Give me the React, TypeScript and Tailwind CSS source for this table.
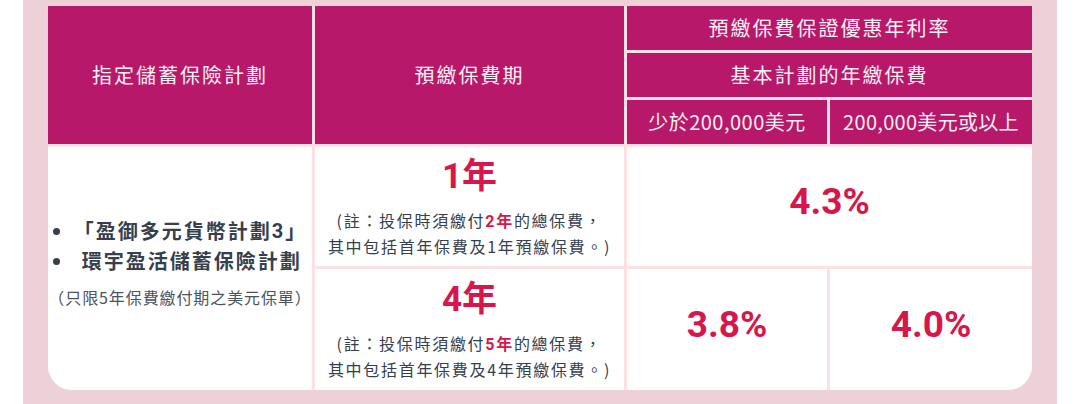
import React from 'react';

const CJK = "font-['Noto_Sans_CJK_TC','Noto_Sans',sans-serif]";
const NUM = "font-['Roboto','Noto_Sans_CJK_TC',sans-serif]";

const headCell = `bg-[#b8186a] text-[#fdf0f4] text-[20px] flex items-center justify-center ${CJK}`;

function Note({ paid, pre }: { paid: string; pre: string }) {
  return (
    <div className="mt-[12px] text-[16px] leading-[24px] tracking-[1.7px] text-[#36404d] text-center">
      <div>
        (註：投保時須繳付<span className={`font-bold text-[#d7174b] ${NUM}`}>{paid}</span>
        <span className="font-bold text-[#d7174b]">年</span>的總保費，
      </div>
      <div>其中包括首年保費及{pre}年預繳保費。)</div>
    </div>
  );
}

function Period({ years, paid }: { years: string; paid: string }) {
  return (
    <div className="bg-white flex flex-col items-center justify-center pb-[2px]">
      <div className="text-[35px] leading-[38px] font-bold text-[#d7174b]">
        <span className={NUM}>{years}</span>年
      </div>
      <Note paid={paid} pre={years} />
    </div>
  );
}

function Rate({ value, span }: { value: string; span?: boolean }) {
  return (
    <div className={`bg-white flex items-center justify-center pb-[10px] ${span ? 'col-span-2' : ''}`}>
      <span className={`text-[37px] font-bold text-[#d7174b] ${NUM}`}>{value}</span>
    </div>
  );
}

export default function App() {
  return (
    <div className={`w-[1080px] h-[404px] bg-white ${CJK}`}>
      <div className="mx-[23px] h-full bg-[#edd0d8] px-[25px] pt-[6px]">
        <div className="grid grid-cols-[264px_309px_200px_202px] grid-rows-[44px_44px_44px_119px_121px] gap-[3px] bg-[#fbe1e4] rounded-b-[24px] overflow-hidden">
          <div className={`${headCell} row-span-3 tracking-[2px]`}>指定儲蓄保險計劃</div>
          <div className={`${headCell} row-span-3 tracking-[2px]`}>預繳保費期</div>
          <div className={`${headCell} col-span-2 tracking-[2px]`}>預繳保費保證優惠年利率</div>
          <div className={`${headCell} col-span-2 tracking-[2px]`}>基本計劃的年繳保費</div>
          <div className={`${headCell} tracking-[0.5px]`}>少於200,000美元</div>
          <div className={`${headCell} tracking-[0.3px]`}>200,000美元或以上</div>

          <div className="row-span-2 bg-white flex flex-col items-center justify-center pb-[12px] text-[#36404d] whitespace-nowrap">
            <ul className="text-[20px] leading-[30px] font-bold tracking-[2px]">
              <li className="flex items-center">
                <span className="w-[7px] h-[7px] rounded-full bg-[#36404d] mr-[14px]" />
                「盈御多元貨幣計劃<span className={NUM}>3</span>」
              </li>
              <li className="flex items-center">
                <span className="w-[7px] h-[7px] rounded-full bg-[#36404d] mr-[22px]" />
                環宇盈活儲蓄保險計劃
              </li>
            </ul>
            <div className="mt-[9px] text-[16px] leading-[24px] tracking-[0.9px] text-[#4a5360]">
              （只限5年保費繳付期之美元保單）
            </div>
          </div>
          <Period years="1" paid="2" />
          <Rate value="4.3%" span />
          <Period years="4" paid="5" />
          <Rate value="3.8%" />
          <Rate value="4.0%" />
        </div>
      </div>
    </div>
  );
}
